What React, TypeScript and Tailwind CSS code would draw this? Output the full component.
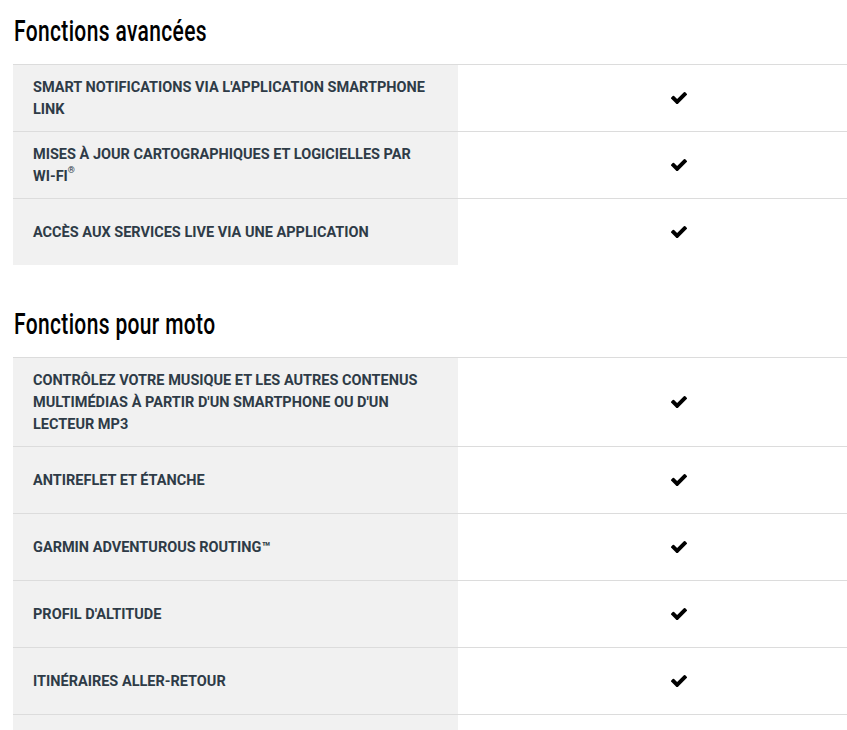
import React from "react";

type Row = { label: React.ReactNode };

const sections: { title: string; rows: Row[] }[] = [
  {
    title: "Fonctions avancées",
    rows: [
      { label: "SMART NOTIFICATIONS VIA L'APPLICATION SMARTPHONE LINK" },
      {
        label: (
          <>
            MISES À JOUR CARTOGRAPHIQUES ET LOGICIELLES PAR{" "}
            <span className="whitespace-nowrap">
              WI-FI<sup className="text-[9px] align-[4px]">®</sup>
            </span>
          </>
        ),
      },
      { label: "ACCÈS AUX SERVICES LIVE VIA UNE APPLICATION" },
    ],
  },
  {
    title: "Fonctions pour moto",
    rows: [
      {
        label:
          "CONTRÔLEZ VOTRE MUSIQUE ET LES AUTRES CONTENUS MULTIMÉDIAS À PARTIR D'UN SMARTPHONE OU D'UN LECTEUR MP3",
      },
      { label: "ANTIREFLET ET ÉTANCHE" },
      { label: "GARMIN ADVENTUROUS ROUTING™" },
      { label: "PROFIL D'ALTITUDE" },
      { label: "ITINÉRAIRES ALLER-RETOUR" },
      { label: "" },
    ],
  },
];

function Check() {
  return (
    <svg viewBox="121 334 1550 1188" width="16" height="12.3" className="block">
      <path
        fill="#000"
        d="M1671 566q0 40-28 68l-724 724-136 136q-28 28-68 28t-68-28l-136-136-362-362q-28-28-28-68t28-68l136-136q28-28 68-28t68 28l294 295 656-657q28-28 68-28t68 28l136 136q28 28 28 68z"
      />
    </svg>
  );
}

export default function App() {
  return (
    <div className="w-[847px] h-[730px] overflow-hidden bg-white pl-[13px] pt-[12px]">
      {sections.map((s, si) => (
        <div key={si} className={si > 0 ? "mt-[40px]" : ""}>
          <h2
            className="pl-[1px] text-[30px] leading-[38px] text-black font-medium mb-[14px] whitespace-nowrap"
            style={{ fontFamily: 'Roboto, "Liberation Sans", sans-serif' }}
          >
            <span className="inline-block origin-left scale-x-[0.7] tracking-[0.5px]">{s.title}</span>
          </h2>
          <div className="flex flex-col">
            {s.rows.map((r, ri) => (
              <div key={ri} className="flex border-t border-[#dcdcdc] min-h-[67px]">
                <div
                  className="w-[445px] shrink-0 bg-[#f1f1f1] flex items-center pl-[20px] pr-[16px] pt-[12px] pb-[10px] text-[14.5px] leading-[22px] font-bold text-[#2e3b47]"
                  style={{ fontFamily: 'Roboto, "Liberation Sans", sans-serif' }}
                >
                  <span>{r.label}</span>
                </div>
                <div className="flex-1 flex items-center pl-[213px]">
                  {r.label !== "" && <Check />}
                </div>
              </div>
            ))}
          </div>
        </div>
      ))}
    </div>
  );
}
